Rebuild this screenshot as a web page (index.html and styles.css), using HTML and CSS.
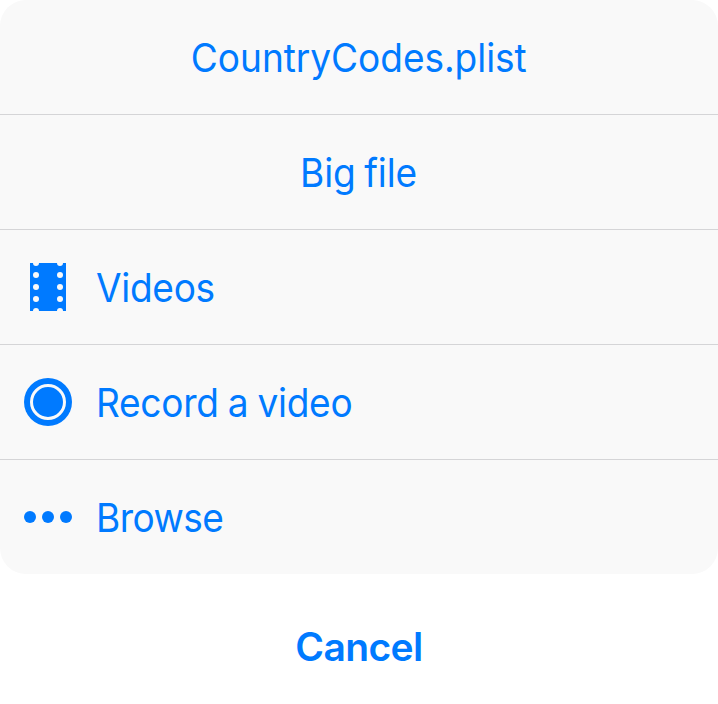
FILE: index.html
```html
<!DOCTYPE html>
<html lang="en">
<head>
<meta charset="utf-8">
<title>Choose a file</title>
<link rel="stylesheet" href="styles.css">
</head>
<body>
<div class="sheet">
  <div class="row center"><span class="t-country">CountryCodes.plist</span></div>
  <div class="row center"><span class="t-big">Big file</span></div>
  <div class="row">
    <svg class="icon" viewBox="0 0 48 48"><path d="M6 0h36v48H6z" fill="#007aff"/><g fill="#f9f9f9"><path d="M9 0h6a3 3 0 0 1-6 0zM33 0h6a3 3 0 0 1-6 0zM9 48h6a3 3 0 0 0-6 0zM33 48h6a3 3 0 0 0-6 0z"/><circle cx="12" cy="12" r="3"/><circle cx="12" cy="24" r="3"/><circle cx="12" cy="36" r="3"/><circle cx="36" cy="12" r="3"/><circle cx="36" cy="24" r="3"/><circle cx="36" cy="36" r="3"/></g></svg>
    <span class="t-videos">Videos</span>
  </div>
  <div class="row">
    <svg class="icon" viewBox="0 0 48 48"><circle cx="24" cy="24" r="24" fill="#007aff"/><circle cx="24" cy="24" r="16.5" fill="none" stroke="#f9f9f9" stroke-width="3"/></svg>
    <span class="t-record">Record a video</span>
  </div>
  <div class="row">
    <svg class="icon" viewBox="0 0 48 48" fill="#007aff"><circle cx="6" cy="24" r="6"/><circle cx="24" cy="24" r="6"/><circle cx="42" cy="24" r="6"/></svg>
    <span class="t-browse">Browse</span>
  </div>
</div>
<div class="cancel"><span>Cancel</span></div>
</body>
</html>
```
FILE: styles.css
```css
* { box-sizing: border-box; }
body {
  margin: 0;
  height: 704px;
  overflow: hidden;
  background: #fff;
  color: #007aff;
  font: 400 39px/48px Inter, sans-serif;
}
.sheet {
  height: 574px;
  border-radius: 26px;
  background: #f9f9f9;
  overflow: hidden;
}
.row {
  display: flex;
  align-items: center;
  gap: 24px;
  height: 115px;
  padding: 0 24px;
  border-bottom: 1px solid #d5d5d7;
  white-space: nowrap;
}
.row:last-child { height: 114px; border-bottom: 0; }
.row span {
  padding-top: 1px;
  transform: scaleX(.95);
  transform-origin: left;
}
.row.center { justify-content: center; }
.row.center span { transform-origin: center; }
.icon { display: block; width: 48px; height: 48px; flex: none; }
.t-country { letter-spacing: -.05px; }
.t-big { letter-spacing: -.1px; word-spacing: -2px; }
.t-videos { letter-spacing: -.3px; }
.t-record { letter-spacing: -.3px; word-spacing: -1px; }
.t-browse { letter-spacing: -.6px; }
.cancel {
  display: flex;
  align-items: center;
  justify-content: center;
  height: 114px;
  margin-top: 16px;
  border-radius: 26px;
  background: #fff;
  font-weight: 600;
  letter-spacing: -.6px;
}
```
